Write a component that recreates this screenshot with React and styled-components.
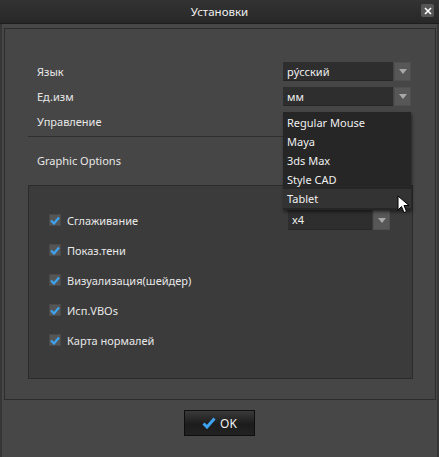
import React from 'react';
import styled, { createGlobalStyle } from 'styled-components';

const Global = createGlobalStyle`
  html, body { margin: 0; padding: 0; background: #474747; }
  body { font-family: "Noto Sans", "DejaVu Sans", sans-serif; font-size: 11px; color: #e6e6e6; }
  * { box-sizing: border-box; }
`;

const controls = ['Regular Mouse', 'Maya', '3ds Max', 'Style CAD', 'Tablet'];
const options = ['Сглаживание', 'Показ.тени', 'Визуализация(шейдер)', 'Исп.VBOs', 'Карта нормалей'];

export default function App() {
  return (
    <>
      <Global />
      <Window>
        <TitleBar>
          <Title>Установки</Title>
          <CloseButton>
            <svg width="8" height="8" viewBox="0 0 8 8">
              <path d="M1 1 L7 7 M7 1 L1 7" stroke="#fff" strokeWidth="1.6" />
            </svg>
          </CloseButton>
        </TitleBar>
        <Body>
          <Panel>
            <Row>
              <Label>Язык</Label>
              <Combo value="рýсский" />
            </Row>
            <Row>
              <Label>Ед.изм</Label>
              <Combo value="мм" />
            </Row>
            <Row>
              <Label>Управление</Label>
              <ComboSlot>
                <List>
                  {controls.map((c) => (
                    <Item key={c} $active={c === 'Tablet'}>{c}</Item>
                  ))}
                  <Cursor width="14" height="20" viewBox="0 0 14 20">
                    <path d="M1 1 L1 15 L4.5 11.5 L7 17.5 L9.5 16.5 L7 10.5 L12 10.5 Z" fill="#fff" stroke="#000" strokeWidth="1" />
                  </Cursor>
                </List>
              </ComboSlot>
            </Row>
            <Separator />
            <Section>Graphic Options</Section>
            <SubPanel>
              {options.map((o, i) => (
                <CheckRow key={o}>
                  <Check>
                    <svg width="10" height="9" viewBox="0 0 10 9">
                      <path d="M1 4.5 L4 7.5 L9 1.5" stroke="#3da3f0" strokeWidth="2.2" fill="none" />
                    </svg>
                  </Check>
                  <CheckLabel>{o}</CheckLabel>
                  {i === 0 && <Combo value="x4" $width={102} $push />}
                </CheckRow>
              ))}
            </SubPanel>
          </Panel>
          <Footer>
            <OkButton>
              <svg width="14" height="12" viewBox="0 0 14 12">
                <path d="M1.5 6.5 L5 10 L12.5 1.5" stroke="#3da3f0" strokeWidth="3" fill="none" />
              </svg>
              OK
            </OkButton>
          </Footer>
        </Body>
      </Window>
    </>
  );
}

function Combo({ value, $width = 128, $push }) {
  return (
    <ComboBox $width={$width} $push={$push}>
      <ComboText>{value}</ComboText>
      <ComboArrow>
        <svg width="8" height="5" viewBox="0 0 8 5">
          <path d="M0 0 L8 0 L4 5 Z" fill="#a8a8a8" />
        </svg>
      </ComboArrow>
    </ComboBox>
  );
}

const Window = styled.div`
  width: 439px;
  height: 457px;
  display: flex;
  flex-direction: column;
  background: #474747;
  border-left: 2px solid #363636;
  border-right: 2px solid #363636;
`;

const TitleBar = styled.div`
  height: 24px;
  flex: none;
  position: relative;
  display: flex;
  align-items: center;
  justify-content: center;
  background: linear-gradient(#333333, #272727);
  border-bottom: 1px solid #1e1e1e;
  margin: 0 -2px;
`;

const Title = styled.div`
  font-size: 11.5px;
  color: #f0f0f0;
`;

const CloseButton = styled.div`
  position: absolute;
  right: 5px;
  top: 4px;
  width: 13px;
  height: 13px;
  background: #565656;
  border-radius: 2px;
  display: flex;
  align-items: center;
  justify-content: center;
`;

const Body = styled.div`
  flex: 1;
  display: flex;
  flex-direction: column;
  padding: 4px 1px 0 2px;
`;

const Panel = styled.div`
  height: 372px;
  border: 1px solid #2c2c2c;
  background: #464646;
  padding: 33px 24px 0 23px;
  display: flex;
  flex-direction: column;
`;

const Row = styled.div`
  height: 19px;
  margin-bottom: 6px;
  padding-left: 9px;
  display: flex;
  align-items: center;
  justify-content: space-between;
`;

const Label = styled.span`
  color: #e8e8e8;
`;

const ComboBox = styled.div`
  width: ${(p) => p.$width}px;
  height: ${(p) => (p.$push ? 20 : 19)}px;
  display: flex;
  margin-left: ${(p) => (p.$push ? 'auto' : '0')};
`;

const ComboText = styled.div`
  flex: 1;
  background: #2e2e2e;
  border-bottom: 1px solid #262626;
  padding-left: 4px;
  display: flex;
  align-items: center;
  color: #f0f0f0;
`;

const ComboArrow = styled.div`
  width: 17px;
  margin-left: 1px;
  background: #575757;
  border: 1px solid #4f4f4f;
  display: flex;
  align-items: center;
  justify-content: center;
`;

const ComboSlot = styled.div`
  width: 128px;
  height: 19px;
  position: relative;
`;

const List = styled.div`
  position: absolute;
  left: 0;
  top: 0;
  width: 128px;
  padding: 1px 0 2px;
  background: #262626;
  box-shadow: 1px 2px 3px rgba(0, 0, 0, 0.5);
  z-index: 2;
`;

const Item = styled.div`
  height: 19px;
  padding-left: 4px;
  display: flex;
  align-items: center;
  background: ${(p) => (p.$active ? '#333333' : 'transparent')};
  color: #f0f0f0;
`;

const Cursor = styled.svg`
  position: absolute;
  left: 114px;
  top: 83px;
`;

const Separator = styled.div`
  height: 1px;
  background: #2f2f2f;
  margin: -1px 0 0 0;
  width: 280px;
`;

const Section = styled.div`
  padding: 16px 0 0 9px;
  height: 48px;
  color: #e8e8e8;
`;

const SubPanel = styled.div`
  height: 194px;
  width: 385px;
  background: #3b3b3b;
  border: 1px solid #2b2b2b;
  padding: 24px 22px 0 20px;
  display: flex;
  flex-direction: column;
`;

const CheckRow = styled.div`
  height: 20px;
  margin-bottom: 10px;
  display: flex;
  align-items: center;
`;

const Check = styled.div`
  width: 12px;
  height: 12px;
  background: #555555;
  border: 1px solid #4a4a4a;
  display: flex;
  align-items: center;
  justify-content: center;
`;

const CheckLabel = styled.span`
  margin-left: 6px;
  color: #e8e8e8;
`;

const Footer = styled.div`
  display: flex;
  justify-content: center;
  padding-top: 10px;
  padding-right: 1px;
`;

const OkButton = styled.div`
  width: 71px;
  height: 26px;
  border: 1px solid #0e0e0e;
  background: linear-gradient(#3a3a3a, #1c1c1c 55%, #222222);
  display: flex;
  align-items: center;
  justify-content: center;
  gap: 4px;
  font-size: 12px;
  color: #f0f0f0;
`;
